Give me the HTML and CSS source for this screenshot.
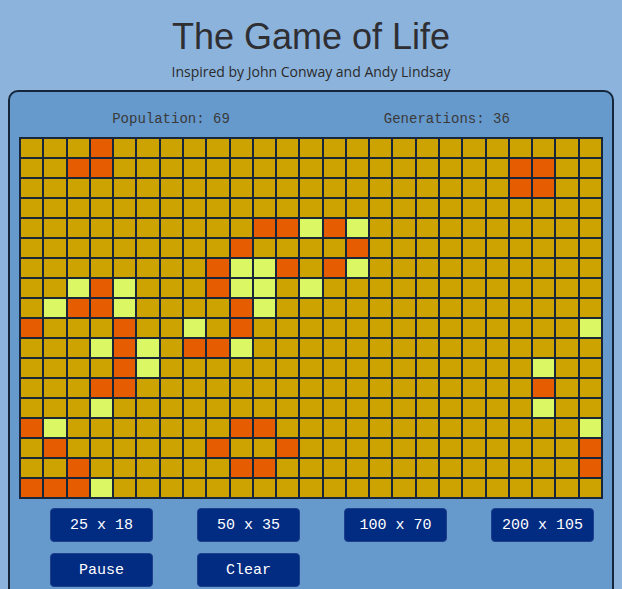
FILE: index.html
```html
<!DOCTYPE html>
<html>
<head>
    <meta charset="utf-8">
    <title>The Game of Life</title>
    <link rel="stylesheet" href="styles.css">
</head>
<body>
    <h1 class="title">The Game of Life</h1>
    <p class="subtitle">Inspired by John Conway and Andy Lindsay</p>

    <div class="board">
        <div class="stats">
            <span id="population">Population: 69</span>
            <span id="generations">Generations: 36</span>
        </div>

        <div class="grid" id="grid"></div>

        <div class="controls">
            <button class="btn">25 x 18</button>
            <button class="btn">50 x 35</button>
            <button class="btn">100 x 70</button>
            <button class="btn">200 x 105</button>
            <button class="btn">Pause</button>
            <button class="btn">Clear</button>
        </div>
    </div>

    <script>
// Taille de la grille
const cols = 25;
const rows = 18;

// Cellules vivantes (o) et nouvelles (y) : [ligne, colonne]
const alive = [
  [0,3],[1,2],[1,3],[1,21],[1,22],[2,21],[2,22],
  [4,10],[4,11],[4,13],[5,9],[5,14],
  [6,8],[6,11],[6,13],[7,3],[7,8],
  [8,2],[8,3],[8,9],[9,0],[9,4],[9,9],
  [10,4],[10,7],[10,8],[11,4],[12,3],[12,4],[12,22],
  [14,0],[14,9],[14,10],[15,1],[15,8],[15,11],[15,24],
  [16,2],[16,9],[16,10],[16,24],[17,0],[17,1],[17,2]
];
const born = [
  [4,12],[4,14],[6,9],[6,10],[6,14],
  [7,2],[7,4],[7,9],[7,10],[7,12],
  [8,1],[8,4],[8,10],[9,7],[9,24],
  [10,3],[10,5],[10,9],[11,5],[11,22],
  [13,3],[13,22],[14,1],[14,24],[17,3]
];

const grid = document.querySelector("#grid");
const state = {};
alive.forEach(([r, c]) => state[r + "-" + c] = "alive");
born.forEach(([r, c]) => state[r + "-" + c] = "born");

for (let r = 0; r < rows; r++) {
  for (let c = 0; c < cols; c++) {
    const cell = document.createElement("div");
    cell.className = "cell";
    if (state[r + "-" + c]) cell.classList.add(state[r + "-" + c]);
    grid.appendChild(cell);
  }
}
    </script>
</body>
</html>
```

FILE: styles.css
```css
/* Page */
body {
  margin: 8px;
  background-color: #8cb3dc;
  font-family: "Liberation Sans", Arial, sans-serif;
  color: #333;
}

/* En-tête */
.title {
  margin: 8px 0 0;
  font-size: 36px;
  font-weight: normal;
  line-height: 41px;
  text-align: center;
  color: #2e2e33;
}

.subtitle {
  margin: 5px 0 8px;
  font-family: "Open Sans", sans-serif;
  font-size: 14px;
  line-height: 20px;
  text-align: center;
  color: #2a2a2a;
}

/* Plateau */
.board {
  background-color: #6699cc;
  border: 2px solid #15253a;
  border-radius: 10px;
  padding: 9px 9px 20px;
}

.stats {
  display: flex;
  justify-content: center;
  gap: 154px;
  margin: 10px 0 10px;
  font-family: "Liberation Mono", "Courier New", monospace;
  font-size: 14px;
  line-height: 16px;
  color: #3a3a3a;
}

.grid {
  display: grid;
  grid-template-columns: repeat(25, 1fr);
  grid-auto-rows: 18px;
  gap: 2px;
  padding: 2px;
  background-color: #17263a;
}

.cell {
  background-color: #cca300;
}

.cell.alive {
  background-color: #e65c00;
}

.cell.born {
  background-color: #dbf763;
}

/* Boutons */
.controls {
  display: flex;
  flex-wrap: wrap;
  gap: 11px 44px;
  margin-top: 9px;
  padding-left: 31px;
}

.btn {
  width: 103px;
  height: 34px;
  background-color: #022b82;
  border: 1px solid #1d3f8c;
  border-radius: 4px;
  color: #fff;
  font-family: "Liberation Mono", "Courier New", monospace;
  font-size: 15px;
  cursor: pointer;
}

.btn:hover {
  background-color: #0a3a9c;
}
```
